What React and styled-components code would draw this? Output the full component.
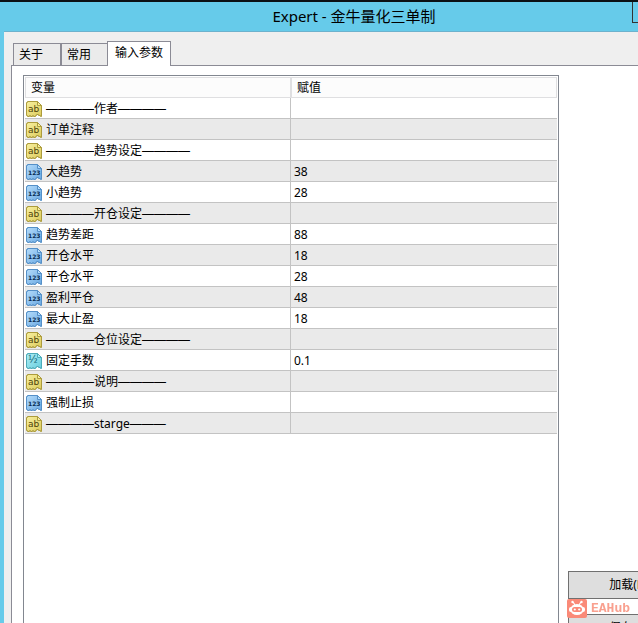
import React, { useState } from 'react';
import styled, { createGlobalStyle, css } from 'styled-components';

const GlobalStyle = createGlobalStyle`
  * {
    box-sizing: border-box;
  }

  body {
    margin: 0;
    overflow: hidden;
    font-family: 'Noto Sans', 'Noto Sans CJK SC', sans-serif;
    font-size: 12px;
    line-height: 16px;
    color: #000;
  }

  button {
    font: inherit;
    color: inherit;
    border-radius: 0;
  }
`;

const Dialog = styled.div`
  display: flex;
  flex-direction: column;
  height: 100vh;
  padding-left: 4px;
  overflow: hidden;
  background: #66cbea;
  border-top: 2px solid #0c1114;
`;

const TitleBar = styled.header`
  display: flex;
  align-items: flex-start;
  flex: none;
  height: 29px;
  margin-left: -4px;
  padding-left: 76px;
`;

const Title = styled.h1`
  flex: 1;
  margin: 0;
  font-size: 15px;
  font-weight: 400;
  line-height: 29px;
  text-align: center;
`;

const CaptionButton = styled.button`
  width: 6px;
  height: 21px;
  padding: 0;
  background: transparent;
  border: solid #333;
  border-width: 0 0 1px 1px;
`;

const Client = styled.main`
  display: flex;
  flex-direction: column;
  flex: 1;
  min-height: 0;
  padding: 9px 0 0 7px;
  background: #efefef;
  border-top: 1px solid #6db2cd;
`;

const TabList = styled.div`
  display: flex;
  align-items: flex-end;
  flex: none;
  padding-left: 1px;
`;

const Tab = styled.button`
  height: 22px;
  padding: 0 17px 0 5px;
  background: #ebebeb;
  border: 1px solid #8b8b95;
  border-bottom: 0;

  &:first-child {
    margin-left: 1px;
  }

  & + & {
    padding-right: 16px;
    border-right: 0;
  }

  ${({ $active }) =>
    $active &&
    css`
      && {
        position: relative;
        height: 25px;
        margin-bottom: -1px;
        padding: 0 7px 2px;
        background: #fff;
        border-right: 1px solid #8b8b95;
      }
    `}
`;

const Panel = styled.section`
  display: flex;
  flex: 1;
  gap: 9px;
  min-height: 0;
  padding: 9px 0 0 11px;
  background: #fff;
  border: solid #8b8b95;
  border-width: 1px 0 0 1px;
`;

const ListBox = styled.div`
  flex: 1;
  padding: 1px;
  overflow: hidden;
  border: 1px solid #828790;
  border-bottom: 0;
`;

const Table = styled.table`
  width: 100%;
  table-layout: fixed;
  border-spacing: 0;
`;

const HeadCell = styled.th`
  height: 21px;
  padding: 0 5px;
  font-weight: 400;
  text-align: left;
  background: #fcfcfc;
  border: 1px solid #dfdfe1;
`;

const Row = styled.tr`
  &:nth-child(even) {
    background: #eaeaea;
  }
`;

const Cell = styled.td`
  height: 21px;
  padding: 2px 3px 0;
  border-bottom: 1px solid #c3c3c3;

  &:first-child {
    padding: 0 1px;
    border-right: 1px solid #c3c3c3;
  }
`;

const Variable = styled.div`
  display: flex;
  align-items: center;
  gap: 4px;
  height: 20px;
  padding-top: 2px;
`;

const Icon = styled.svg`
  flex: none;
  width: 16px;
  height: 16px;
`;

const IconText = styled.text`
  font-family: 'DejaVu Sans', sans-serif;
  font-weight: ${({ $bold }) => ($bold ? 700 : 400)};
`;

const Rule = styled.span`
  font-family: 'Liberation Sans', sans-serif;
`;

const Actions = styled.div`
  display: flex;
  flex-direction: column;
  gap: 15px;
  flex: none;
  width: 70px;
  padding-top: 496px;
  overflow: hidden;
`;

const ActionButton = styled.button`
  flex: none;
  width: 120px;
  height: 28px;
  padding: 0;
  background: #dedede;
  border: 1px solid #707070;
`;

const Watermark = styled.div`
  position: fixed;
  right: 8px;
  bottom: 5px;
  display: flex;
  align-items: center;
  gap: 4px;
  color: #f9a08f;
  font-family: 'Liberation Mono', monospace;
  font-size: 13px;
  font-weight: 700;
`;

const ICONS = {
  text: { light: '#f8f0a0', dark: '#dccb5c', edge: '#ad9c3c', ink: '#4c4308', label: 'ab', size: 9, x: 2, y: 11 },
  int: { light: '#b4dcfb', dark: '#6ba9e2', edge: '#5590c8', ink: '#082c52', label: '123', size: 6, x: 2, y: 11 },
  real: { light: '#aeeef5', dark: '#68cddd', edge: '#4dabb9', ink: '#116372', label: '½', size: 10, x: 2, y: 10 },
};

const ROWS = [
  { type: 'text', name: '作者', rules: [4, 4] },
  { type: 'text', name: '订单注释' },
  { type: 'text', name: '趋势设定', rules: [4, 4] },
  { type: 'int', name: '大趋势', value: '38' },
  { type: 'int', name: '小趋势', value: '28' },
  { type: 'text', name: '开仓设定', rules: [4, 4] },
  { type: 'int', name: '趋势差距', value: '88' },
  { type: 'int', name: '开仓水平', value: '18' },
  { type: 'int', name: '平仓水平', value: '28' },
  { type: 'int', name: '盈利平仓', value: '48' },
  { type: 'int', name: '最大止盈', value: '18' },
  { type: 'text', name: '仓位设定', rules: [4, 4] },
  { type: 'real', name: '固定手数', value: '0.1' },
  { type: 'text', name: '说明', rules: [4, 4] },
  { type: 'int', name: '强制止损' },
  { type: 'text', name: 'starge', rules: [4, 3] },
];

const TABS = ['关于', '常用', '输入参数'];

const TypeIcon = ({ type }) => {
  const { light, dark, edge, ink, label, size, x, y } = ICONS[type];

  return (
    <Icon viewBox="0 0 16 16" aria-hidden="true">
      <defs>
        <linearGradient id={`fill-${type}`} x1="0" y1="0" x2="1" y2="1">
          <stop offset="0" stopColor={light} />
          <stop offset="1" stopColor={dark} />
        </linearGradient>
      </defs>
      <path
        d="M.5 1.5h1v-1h10l4 4v11h-1v-1h-2v-1h-2v1h-1v1h-2v-1h-1v1h-2v-1h-1v1h-2v-1h-1z"
        fill={`url(#fill-${type})`}
        stroke={edge}
      />
      <path d="M11.5.5v4h4z" fill={light} stroke={edge} />
      <IconText x={x} y={y} fontSize={size} fill={ink} $bold={type === 'int'}>
        {label}
      </IconText>
    </Icon>
  );
};

const VariableName = ({ name, rules }) => {
  if (!rules) return <span>{name}</span>;

  return (
    <span>
      <Rule>{'—'.repeat(rules[0])}</Rule>
      {name}
      <Rule>{'—'.repeat(rules[1])}</Rule>
    </span>
  );
};

const RobotLogo = () => (
  <svg width="20" height="19" viewBox="0 0 20 19" aria-hidden="true">
    <rect width="20" height="19" rx="2" fill="#fa8a78" />
    <path d="M6 3l2 3M14 3l-2 3" stroke="#fff" strokeWidth="1.2" />
    <circle cx="5.5" cy="3" r="1.2" fill="#fff" />
    <circle cx="14.5" cy="3" r="1.2" fill="#fff" />
    <rect x="2" y="8" width="16" height="5" rx="2" fill="#fff" />
    <ellipse cx="10" cy="10.5" rx="6.5" ry="5.5" fill="#fff" />
    <rect x="5" y="8" width="10" height="5" rx="2.5" fill="#fa8a78" />
    <circle cx="7.8" cy="10.5" r="1.1" fill="#fff" />
    <circle cx="12.2" cy="10.5" r="1.1" fill="#fff" />
  </svg>
);

const App = () => {
  const [activeTab, setActiveTab] = useState('输入参数');

  return (
    <>
      <GlobalStyle />
      <Dialog>
        <TitleBar>
          <Title>Expert - 金牛量化三单制</Title>
          <CaptionButton aria-label="帮助" />
        </TitleBar>
        <Client>
          <TabList role="tablist">
            {TABS.map((tab) => (
              <Tab
                key={tab}
                role="tab"
                aria-selected={tab === activeTab}
                $active={tab === activeTab}
                onClick={() => setActiveTab(tab)}
              >
                {tab}
              </Tab>
            ))}
          </TabList>
          <Panel>
            <ListBox>
              <Table>
                <thead>
                  <tr>
                    <HeadCell scope="col">变量</HeadCell>
                    <HeadCell scope="col">赋值</HeadCell>
                  </tr>
                </thead>
                <tbody>
                  {ROWS.map((row) => (
                    <Row key={row.name}>
                      <Cell>
                        <Variable>
                          <TypeIcon type={row.type} />
                          <VariableName name={row.name} rules={row.rules} />
                        </Variable>
                      </Cell>
                      <Cell>{row.value}</Cell>
                    </Row>
                  ))}
                </tbody>
              </Table>
            </ListBox>
            <Actions>
              <ActionButton>加载(L)</ActionButton>
              <ActionButton>保存(S)</ActionButton>
            </Actions>
          </Panel>
        </Client>
        <Watermark>
          <RobotLogo />
          EAHub
        </Watermark>
      </Dialog>
    </>
  );
};

export default App;
